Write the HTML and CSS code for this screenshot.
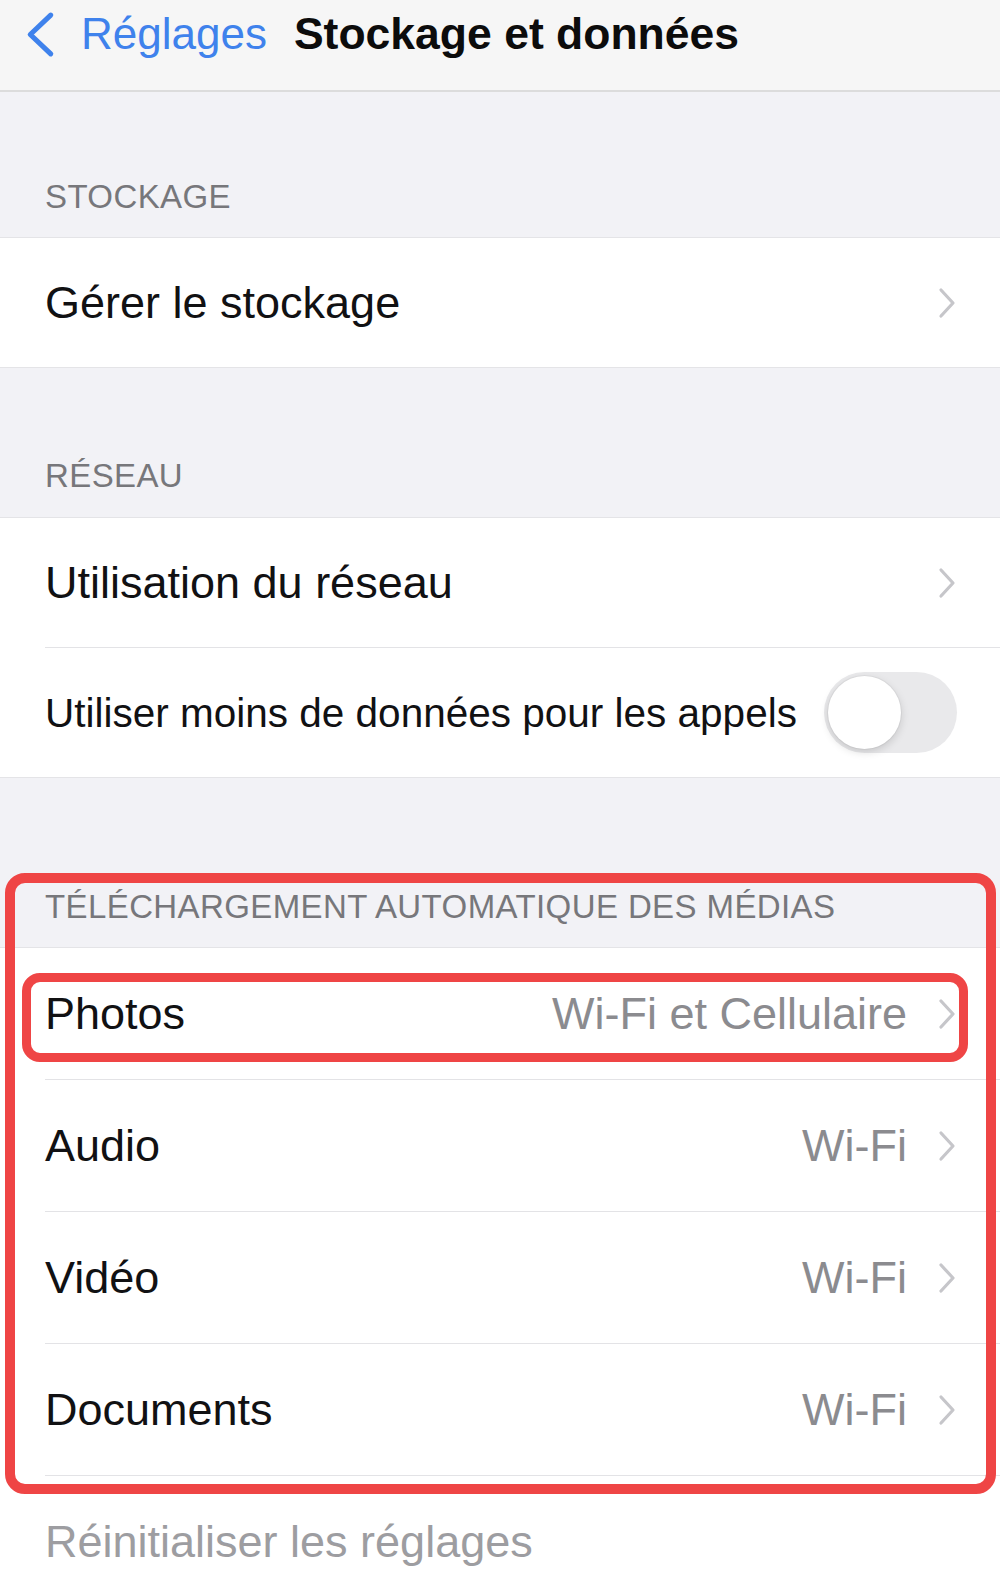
FILE: index.html
```html
<!DOCTYPE html>
<html lang="fr">
<head>
<meta charset="utf-8">
<title>Stockage et données</title>
<link rel="stylesheet" href="styles.css">
</head>
<body>
<header class="nav">
  <a class="back" href="#">
    <svg class="back-icon" viewBox="0 0 30 46" aria-hidden="true"><polyline points="25,4 5,23 25,42"/></svg>
    <span class="back-label">Réglages</span>
  </a>
  <h1 class="title">Stockage et données</h1>
</header>

<main class="page">
  <section class="section section-first">
    <h2 class="section-header">STOCKAGE</h2>
    <ul class="group group-compact">
      <li class="row">
        <div class="row-inner">
          <span class="label">Gérer le stockage</span>
          <svg class="chevron" viewBox="0 0 20 34" aria-hidden="true"><polyline points="4,4 16,17 4,30"/></svg>
        </div>
      </li>
    </ul>
  </section>

  <section class="section section-second">
    <h2 class="section-header">RÉSEAU</h2>
    <ul class="group group-compact">
      <li class="row">
        <div class="row-inner">
          <span class="label">Utilisation du réseau</span>
          <svg class="chevron" viewBox="0 0 20 34" aria-hidden="true"><polyline points="4,4 16,17 4,30"/></svg>
        </div>
      </li>
      <li class="row">
        <div class="row-inner">
          <span class="label label-small">Utiliser moins de données pour les appels</span>
          <span class="toggle"><span class="knob"></span></span>
        </div>
      </li>
    </ul>
  </section>

  <section class="section section-third">
    <div class="highlight highlight-section"></div>
    <h2 class="section-header">TÉLÉCHARGEMENT AUTOMATIQUE DES MÉDIAS</h2>
    <ul class="group">
      <li class="row">
        <div class="highlight highlight-row"></div>
        <div class="row-inner">
          <span class="label">Photos</span>
          <span class="value">Wi-Fi et Cellulaire</span>
          <svg class="chevron" viewBox="0 0 20 34" aria-hidden="true"><polyline points="4,4 16,17 4,30"/></svg>
        </div>
      </li>
      <li class="row">
        <div class="row-inner">
          <span class="label">Audio</span>
          <span class="value">Wi-Fi</span>
          <svg class="chevron" viewBox="0 0 20 34" aria-hidden="true"><polyline points="4,4 16,17 4,30"/></svg>
        </div>
      </li>
      <li class="row">
        <div class="row-inner">
          <span class="label">Vidéo</span>
          <span class="value">Wi-Fi</span>
          <svg class="chevron" viewBox="0 0 20 34" aria-hidden="true"><polyline points="4,4 16,17 4,30"/></svg>
        </div>
      </li>
      <li class="row">
        <div class="row-inner">
          <span class="label">Documents</span>
          <span class="value">Wi-Fi</span>
          <svg class="chevron" viewBox="0 0 20 34" aria-hidden="true"><polyline points="4,4 16,17 4,30"/></svg>
        </div>
      </li>
      <li class="row">
        <div class="row-inner">
          <span class="label label-disabled">Réinitialiser les réglages</span>
        </div>
      </li>
    </ul>
  </section>
</main>
</body>
</html>
```

FILE: styles.css
```css
* {
  box-sizing: border-box;
}

html, body {
  margin: 0;
  padding: 0;
}

body {
  background: #f2f2f6;
  font-family: "Liberation Sans", Arial, sans-serif;
  color: #111113;
  width: 1000px;
  min-height: 1589px;
  overflow: hidden;
}

/* Navigation bar */
.nav {
  height: 92px;
  background: #f6f6f6;
  border-bottom: 2px solid #dcdcdc;
  display: flex;
  align-items: flex-start;
  padding: 9px 0 0 25px;
}

.back {
  display: flex;
  align-items: center;
  height: 50px;
  text-decoration: none;
  color: #3f82ec;
}

.back-icon {
  width: 31px;
  height: 47px;
  fill: none;
  stroke: #3f82ec;
  stroke-width: 5;
  stroke-linecap: round;
  stroke-linejoin: round;
}

.back-label {
  margin-left: 25px;
  font-size: 44px;
  line-height: 50px;
}

.title {
  margin: 0 0 0 27px;
  height: 50px;
  font-size: 44.5px;
  line-height: 50px;
  font-weight: bold;
  color: #0c0c0c;
}

/* Sections */
.section {
  position: relative;
}

.section-header {
  margin: 0;
  padding: 0 45px 20px;
  font-size: 33px;
  line-height: 40px;
  font-weight: normal;
  color: #77777b;
  letter-spacing: 0.4px;
}

.section-first .section-header {
  padding-top: 85px;
}

.section-second .section-header {
  padding-top: 88px;
  padding-bottom: 21px;
}

.section-third .section-header {
  padding-top: 109px;
}

.group {
  list-style: none;
  margin: 0;
  padding: 0;
  background: #ffffff;
  border-top: 1px solid #e4e4e7;
  border-bottom: 1px solid #e4e4e7;
}

.row {
  position: relative;
  padding-left: 45px;
}

.row-inner {
  height: 132px;
  display: flex;
  align-items: center;
  padding-right: 43px;
  border-bottom: 1px solid #e3e3e6;
}

.group-compact .row-inner {
  height: 130px;
}

.row:last-child .row-inner {
  border-bottom: none;
}

.group-compact .row:last-child .row-inner {
  height: 129px;
}

.label {
  flex: 1;
  font-size: 45px;
  line-height: 50px;
  color: #111113;
  white-space: nowrap;
}

.label-small {
  font-size: 40.5px;
}

.label-disabled {
  color: #9d9da1;
}

.value {
  font-size: 45px;
  line-height: 50px;
  color: #8b8b8f;
  margin-right: 30px;
  white-space: nowrap;
}

.chevron {
  width: 20px;
  height: 34px;
  fill: none;
  stroke: #c6c6ca;
  stroke-width: 3.2;
  stroke-linecap: round;
  stroke-linejoin: round;
}

/* Toggle */
.toggle {
  width: 133px;
  height: 81px;
  border-radius: 41px;
  background: #e9e9eb;
  padding: 4px;
  display: flex;
  align-items: center;
}

.knob {
  width: 73px;
  height: 73px;
  border-radius: 50%;
  background: #ffffff;
  box-shadow: 0 3px 8px rgba(0, 0, 0, 0.15), 0 0 0 1px rgba(0, 0, 0, 0.04);
}

/* Red annotation overlays */
.highlight {
  position: absolute;
  border: 10px solid #ef4545;
  pointer-events: none;
  z-index: 2;
}

.highlight-section {
  top: 95px;
  left: 5px;
  right: 4px;
  height: 621px;
  border-radius: 20px;
}

.highlight-row {
  top: 25px;
  left: 22px;
  right: 32px;
  height: 89px;
  border-width: 9px;
  border-radius: 18px;
}
```
